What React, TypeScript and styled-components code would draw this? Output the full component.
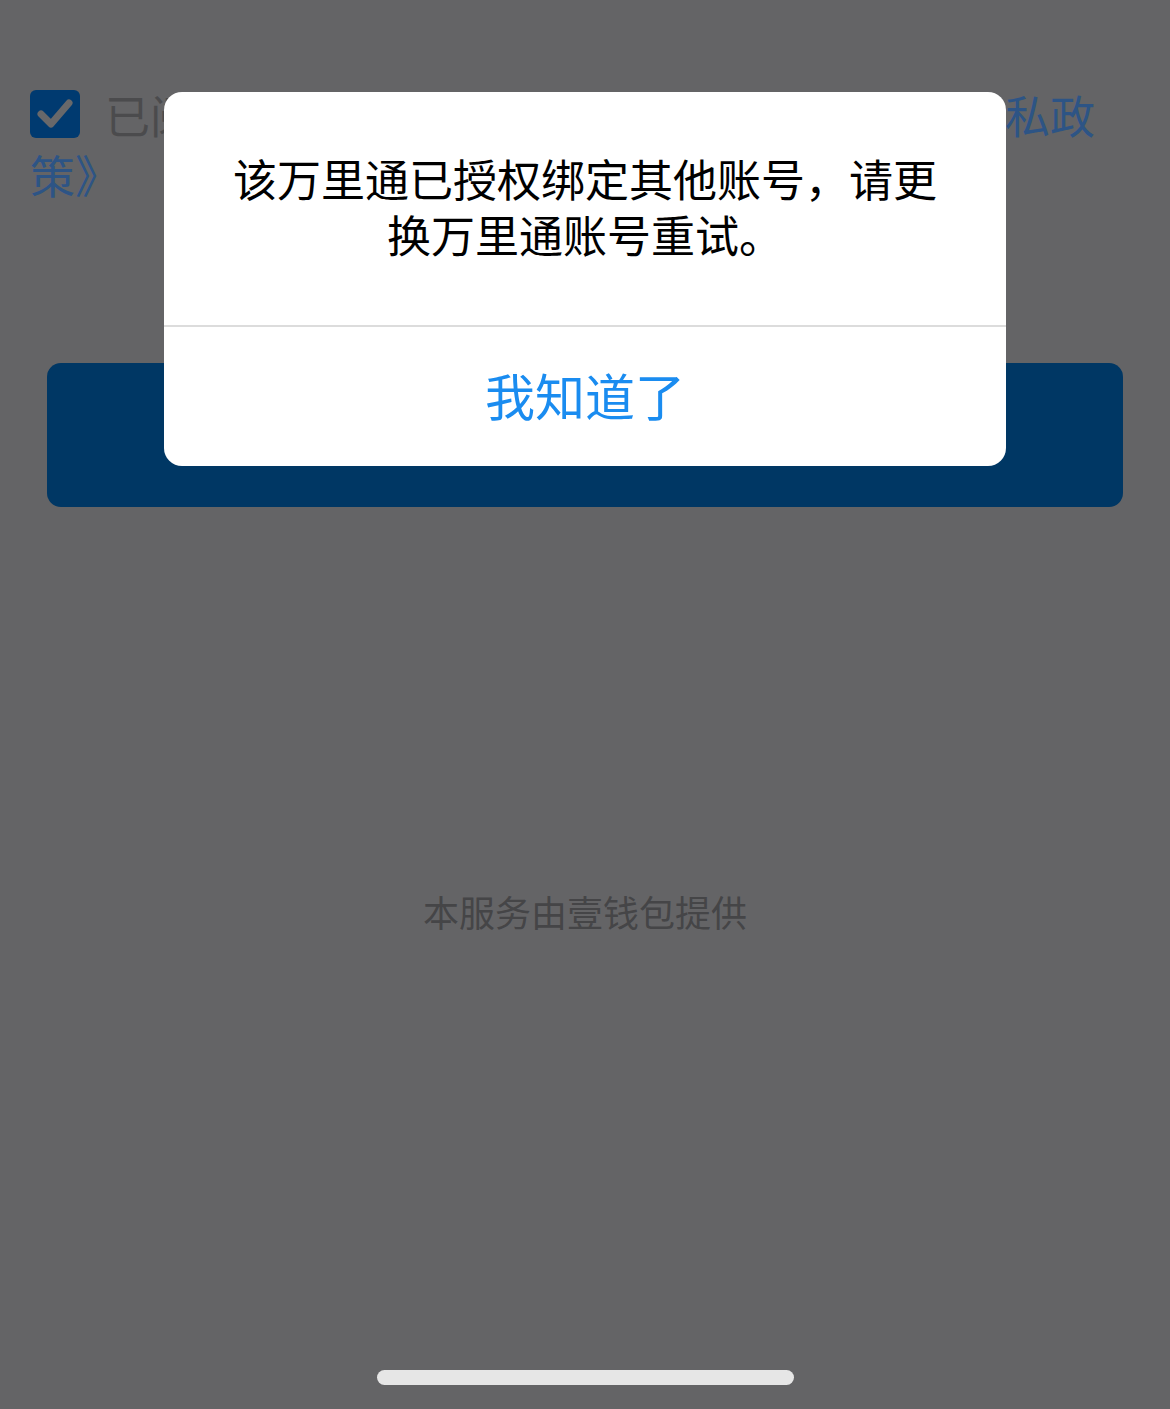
import styled, { createGlobalStyle } from 'styled-components'

const GlobalStyle = createGlobalStyle`
  html, body {
    margin: 0;
    padding: 0;
    background: #646466;
  }
  body {
    font-family: "Noto Sans CJK SC", "Noto Sans", sans-serif;
  }
`

const Page = styled.div`
  position: relative;
  width: 1170px;
  height: 1409px;
  background: #646466;
  overflow: hidden;
  display: flex;
  flex-direction: column;
`

const Agreement = styled.div`
  padding: 85px 30px 0 30px;
  font-size: 45px;
  line-height: 60px;
  color: #4b4b4d;
  white-space: nowrap;
`

const Check = styled.span`
  display: inline-flex;
  align-items: center;
  justify-content: center;
  width: 50px;
  height: 48px;
  margin-right: 25px;
  border-radius: 6px;
  background: #003a70;
  vertical-align: 3px;
`

const Link = styled.span`
  color: #2d5485;
`

const SubmitButton = styled.div`
  margin: 158px 47px 0;
  height: 144px;
  border-radius: 14px;
  background: #003764;
`

const Footer = styled.div`
  margin-top: 378px;
  text-align: center;
  font-size: 36px;
  color: #454547;
`

const HomeBar = styled.div`
  position: absolute;
  left: 377px;
  bottom: 24px;
  width: 417px;
  height: 15px;
  border-radius: 8px;
  background: #e6e6e6;
`

const Overlay = styled.div`
  position: absolute;
  inset: 0;
  display: flex;
  justify-content: center;
  align-items: flex-start;
  padding-top: 92px;
`

const Dialog = styled.div`
  width: 842px;
  background: #fff;
  border-radius: 18px;
  overflow: hidden;
`

const Message = styled.div`
  padding: 58px 60px 63px;
  text-align: center;
  font-size: 44px;
  line-height: 56px;
  color: #000;
`

const Divider = styled.div`
  height: 2px;
  background: #dcdcdc;
`

const ConfirmButton = styled.div`
  height: 139px;
  padding-bottom: 6px;
  box-sizing: border-box;
  display: flex;
  align-items: center;
  justify-content: center;
  font-size: 50px;
  color: #1a8cf0;
`

const App = () => {
    return (
        <>
            <GlobalStyle />
            <Page>
                <Agreement>
                    <Check>
                        <svg width="38" height="34" viewBox="0 0 38 34">
                            <path d="M5 17 L15 27 L33 6" fill="none" stroke="#68686a" strokeWidth="7" strokeLinecap="round" strokeLinejoin="round" />
                        </svg>
                    </Check>
                    已阅读并同意<Link>《壹钱包用户服务协议》</Link>及<Link>《隐私政</Link>
                    <br />
                    <Link>策》</Link>
                </Agreement>
                <SubmitButton />
                <Footer>本服务由壹钱包提供</Footer>
                <HomeBar />
                <Overlay>
                    <Dialog>
                        <Message>该万里通已授权绑定其他账号，请更换万里通账号重试。</Message>
                        <Divider />
                        <ConfirmButton>我知道了</ConfirmButton>
                    </Dialog>
                </Overlay>
            </Page>
        </>
    )
}

export default App
